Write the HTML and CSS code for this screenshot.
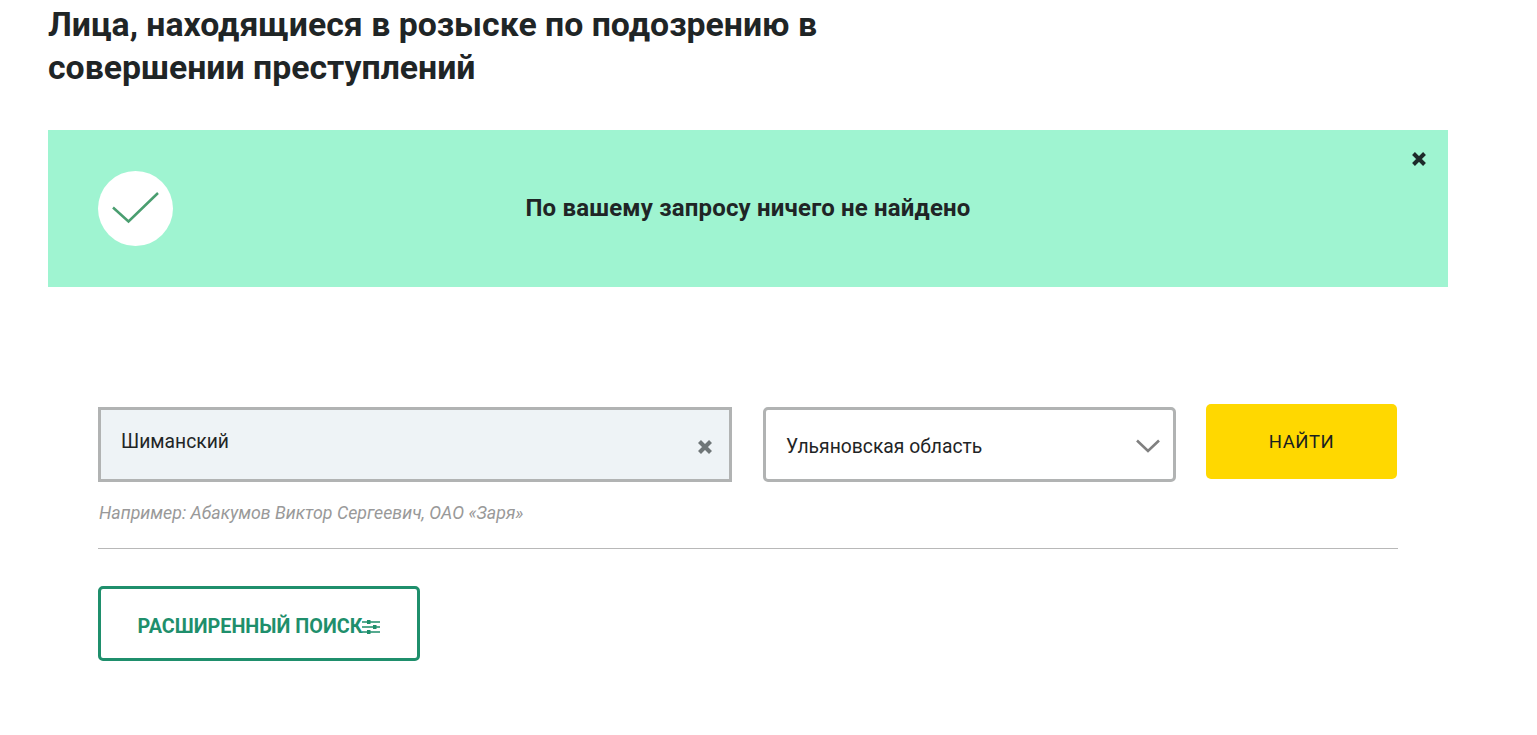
FILE: index.html
```html
<!DOCTYPE html>
<html lang="en">
<head>
  <meta charset="UTF-8" />
  <title>Лица, находящиеся в розыске</title>
  <link rel="stylesheet" href="styles.css">
</head>
<body>
  <main class="page">
    <h1 class="title">Лица, находящиеся в розыске по подозрению в совершении преступлений</h1>

    <div class="notice">
      <span class="notice-icon">
        <svg width="48" height="34" viewBox="0 0 48 34"><path d="M1 15.500 L16.500 29.500 L46 1" fill="none" stroke="#4a9e70" stroke-width="2.500"/></svg>
      </span>
      <p class="notice-text">По вашему запросу ничего не найдено</p>
      <svg class="notice-close" width="16" height="16" viewBox="0 0 16 16"><path d="M2.500 2.500 L13.500 13.500 M13.500 2.500 L2.500 13.500" stroke="#1d2a2a" stroke-width="4"/></svg>
    </div>

    <form class="search">
      <div class="search-row">
        <div class="field field-name">
          <span class="field-value">Шиманский</span>
          <svg class="field-clear" width="16" height="16" viewBox="0 0 16 16"><path d="M2.500 2.500 L13.500 13.500 M13.500 2.500 L2.500 13.500" stroke="#6f7678" stroke-width="4.200"/></svg>
        </div>
        <div class="field field-region">
          <span class="field-value">Ульяновская область</span>
          <svg width="24" height="14" viewBox="0 0 24 14"><path d="M1 1.500 L12 12 L23 1.500" fill="none" stroke="#808080" stroke-width="2.600"/></svg>
        </div>
        <button type="button" class="find-btn">НАЙТИ</button>
      </div>
      <p class="hint">Например: Абакумов Виктор Сергеевич, ОАО «Заря»</p>
      <button type="button" class="advanced-btn">
        РАСШИРЕННЫЙ ПОИСК
        <svg width="18" height="16" viewBox="0 0 18 16">
          <path d="M0 3h18M0 8h18M0 13h18" stroke="#1f8f6c" stroke-width="1.500"/>
          <path d="M5 1h3.500v4H5zM11 6h3.500v4H11zM5 11h3.500v4H5z" fill="#1f8f6c"/>
        </svg>
      </button>
    </form>
  </main>
</body>
</html>
```

FILE: styles.css
```css
* {
  margin: 0; padding: 0; box-sizing: border-box;
  font-family: 'Roboto', 'Liberation Sans', sans-serif;
}

body {
  background: #fff;
  color: #1f2526;
}

.page {
  width: 1400px;
  margin-left: 48px;
  padding-top: 3px;
}

.title {
  width: 800px;
  font-size: 33.8px;
  font-weight: 700;
  line-height: 43px;
  color: #1f2526;
  margin-bottom: 41px;
}

.notice {
  position: relative;
  display: flex;
  align-items: center;
  height: 157px;
  padding-left: 50px;
  background: #9ff4d1;
}

.notice-icon {
  flex: none;
  display: flex;
  align-items: center;
  justify-content: center;
  width: 75px;
  height: 75px;
  border-radius: 50%;
  background: #fff;
}

.notice-text {
  flex: 1;
  padding: 0 125px 2px 0;
  text-align: center;
  font-size: 24px;
  font-weight: 700;
  letter-spacing: 0.18px;
  color: #1f2526;
}

.notice-close {
  position: absolute;
  top: 21px;
  right: 21px;
}

.search {
  width: 1300px;
  margin: 117px 0 0 50px;
}

.search-row {
  display: flex;
  align-items: flex-start;
}

.field {
  display: flex;
  align-items: center;
  justify-content: space-between;
  height: 75px;
  margin-top: 3px;
  border: 3px solid #b1b3b3;
  font-size: 19.3px;
}

.field-name {
  width: 634px;
  padding: 0 16px 0 20px;
  background: #eef3f6;
}

.field-name .field-value {
  margin-top: -6px;
}

.field-clear {
  margin-top: 5px;
}

.field-region {
  width: 413px;
  margin-left: 31px;
  padding: 2px 13px 0 20px;
  border-radius: 5px;
}

.field-region .field-value {
  margin-top: 1px;
}

.find-btn {
  width: 191px;
  height: 75px;
  margin-left: 30px;
  border: none;
  border-radius: 5px;
  background: #ffd800;
  color: #1a1f20;
  font-size: 18.5px;
  letter-spacing: 0.5px;
}

.hint {
  margin-top: 21px;
  padding: 0 0 25px 1px;
  border-bottom: 1px solid #b8b8b8;
  font-size: 17.8px;
  font-style: italic;
  line-height: 20px;
  color: #999;
}

.advanced-btn {
  display: flex;
  align-items: center;
  justify-content: center;
  width: 322px;
  height: 75px;
  margin-top: 37px;
  padding-top: 6px;
  border: 3px solid #1f8f6c;
  border-radius: 5px;
  background: #fff;
  color: #1f8f6c;
  font-size: 19.8px;
  font-weight: 700;
}
```
